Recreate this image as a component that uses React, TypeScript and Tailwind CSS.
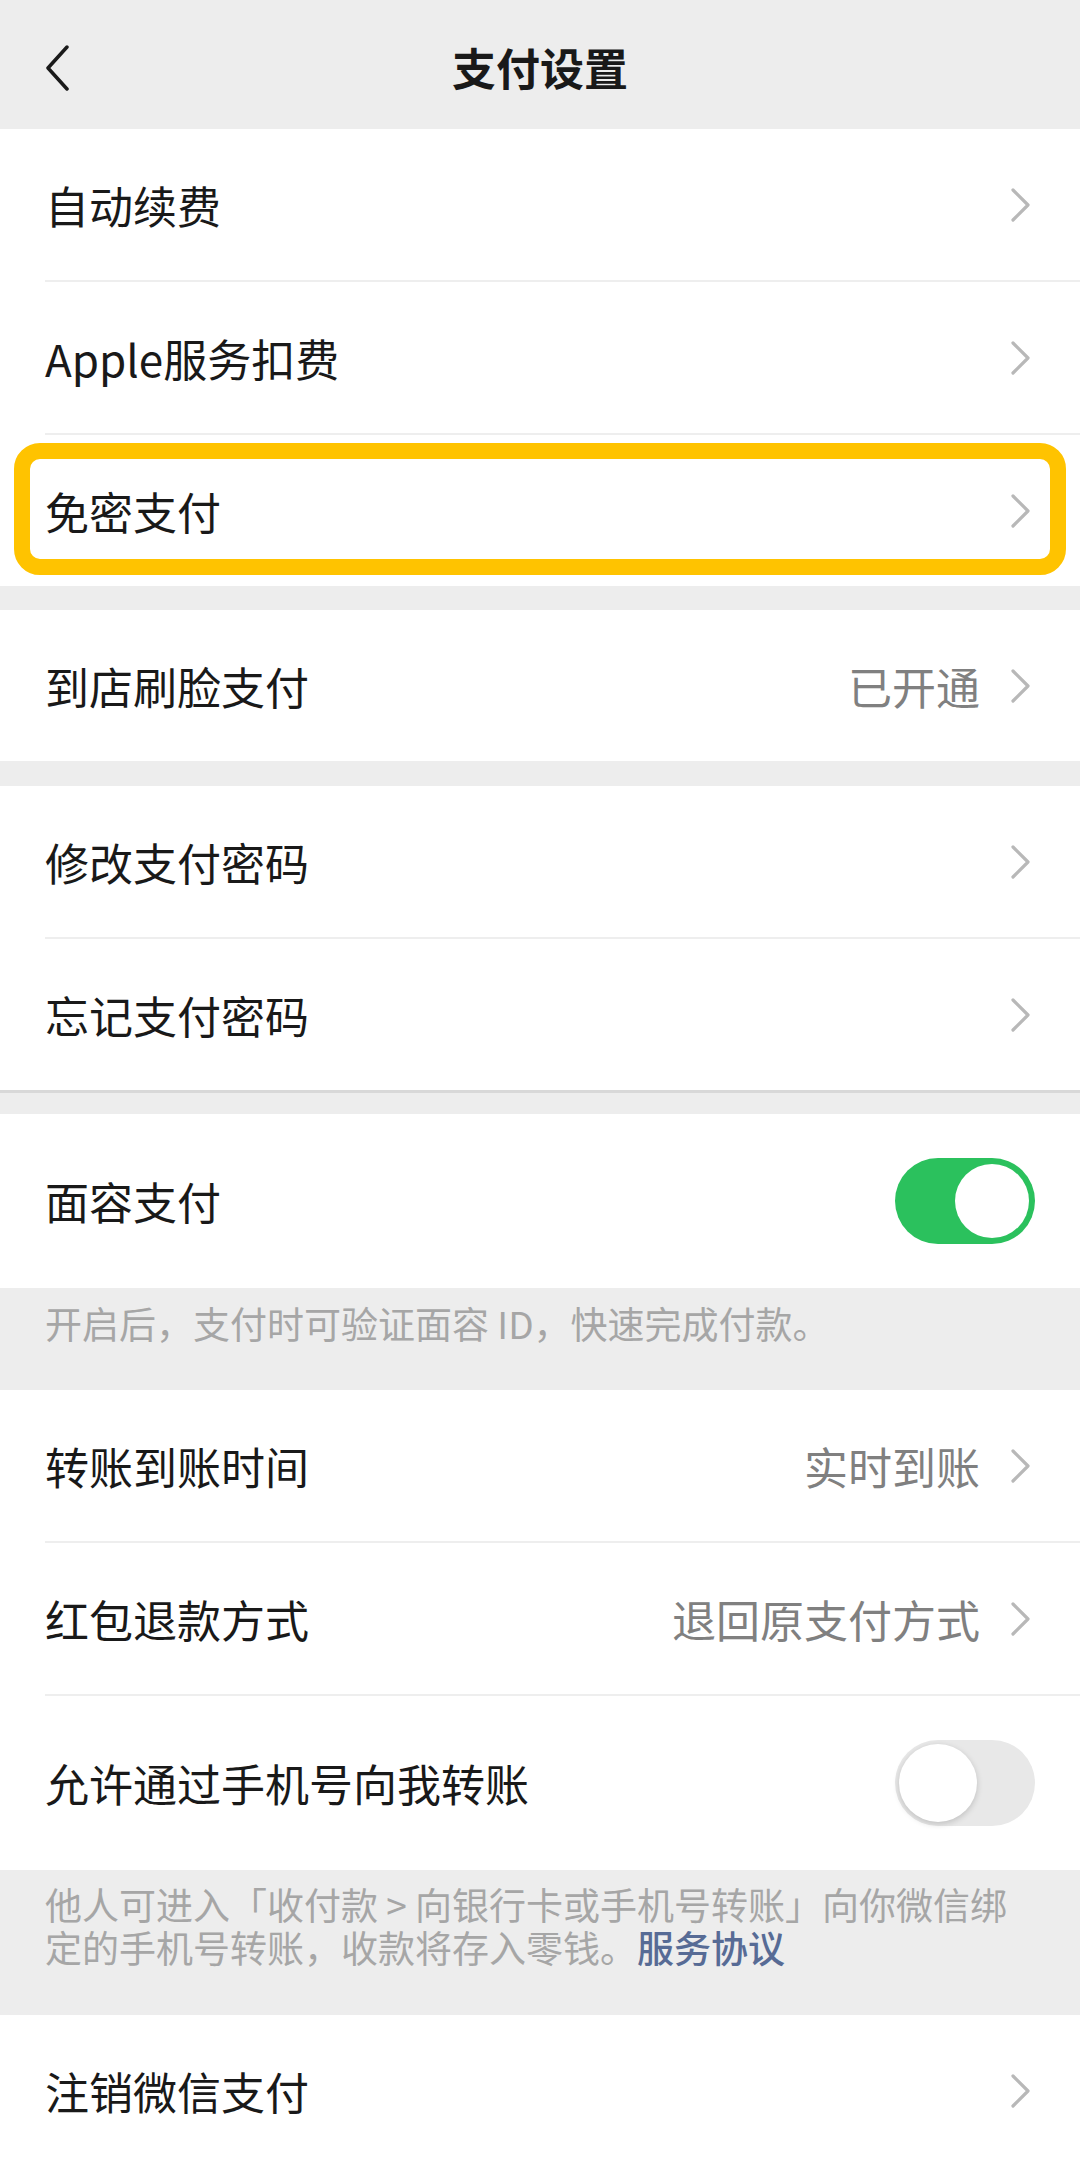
import type { ReactNode } from "react";

const font = { fontFamily: '"Noto Sans CJK SC", "Noto Sans", sans-serif' };

function Chevron() {
  return (
    <svg width="22" height="36" viewBox="0 0 22 36" fill="none" className="shrink-0">
      <polyline
        points="3,3 18,18 3,33"
        stroke="#b8b8b8"
        strokeWidth="3.2"
        strokeLinecap="round"
        strokeLinejoin="round"
      />
    </svg>
  );
}

function BackIcon() {
  return (
    <svg width="28" height="46" viewBox="0 0 28 46" fill="none">
      <polyline
        points="23,2 4,23 23,44"
        stroke="#1a1a1a"
        strokeWidth="3.5"
        strokeLinecap="round"
        strokeLinejoin="round"
      />
    </svg>
  );
}

function Divider() {
  return (
    <div className="bg-white pl-[45px]">
      <div className="h-[2px] bg-[#eeeeee]" />
    </div>
  );
}

interface RowProps {
  label: string;
  value?: string;
  children?: ReactNode;
}

// plain navigation row: label, optional value, chevron
function Row({ label, value, children }: RowProps) {
  return (
    <div className="relative flex h-[151px] items-center justify-between bg-white pl-[45px] pr-[48px]">
      <span className="text-[44px] leading-none text-[#191919]">{label}</span>
      <div className="flex items-center gap-[30px]">
        {value && <span className="text-[44px] leading-none text-[#808080]">{value}</span>}
        <Chevron />
      </div>
      {children}
    </div>
  );
}

function Switch({ on }: { on: boolean }) {
  return on ? (
    <div className="relative h-[86px] w-[140px] rounded-full bg-[#2bc15d]">
      <div className="absolute right-[6px] top-[6px] h-[74px] w-[74px] rounded-full bg-white" />
    </div>
  ) : (
    <div className="relative h-[86px] w-[140px] rounded-full bg-[#e8e8e8]">
      <div className="absolute left-[4px] top-[4px] h-[78px] w-[78px] rounded-full bg-white shadow-[0_2px_6px_rgba(0,0,0,0.18)]" />
    </div>
  );
}

function SwitchRow({ label, on }: { label: string; on: boolean }) {
  return (
    <div className="flex h-[174px] items-center justify-between bg-white pl-[45px] pr-[45px]">
      <span className="text-[44px] leading-none text-[#191919]">{label}</span>
      <Switch on={on} />
    </div>
  );
}

export default function App() {
  return (
    <div className="h-[2162px] w-[1080px] overflow-hidden bg-[#ededed]" style={font}>
      {/* Header */}
      <div className="relative flex h-[129px] items-center justify-center bg-[#ededed] pt-[4px]">
        <div className="absolute left-[44px] top-[45px]">
          <BackIcon />
        </div>
        <h1 className="text-[44px] font-semibold leading-none text-[#191919]">支付设置</h1>
      </div>

      {/* Group 1 */}
      <Row label="自动续费" />
      <Divider />
      <Row label="Apple服务扣费" />
      <Divider />
      <Row label="免密支付">
        <div className="pointer-events-none absolute bottom-[11px] left-[14px] right-[14px] top-[8px] rounded-[26px] border-[16px] border-[#ffc300]" />
      </Row>

      <div className="h-[24px]" />
      <Row label="到店刷脸支付" value="已开通" />

      <div className="h-[25px]" />
      <Row label="修改支付密码" />
      <Divider />
      <Row label="忘记支付密码" />

      <div className="h-[3px] bg-[#d8d8d8]" />
      <div className="h-[21px]" />
      <SwitchRow label="面容支付" on />
      <p className="h-[102px] pl-[45px] pr-[45px] pt-[12px] text-[37px] leading-[46px] text-[#a6a6a6]">
        开启后，支付时可验证面容 ID，快速完成付款。
      </p>

      <Row label="转账到账时间" value="实时到账" />
      <Divider />
      <Row label="红包退款方式" value="退回原支付方式" />
      <Divider />
      <SwitchRow label="允许通过手机号向我转账" on={false} />
      <div className="flex h-[145px] flex-col pl-[45px] pr-[40px] pt-[13px] text-[37px] leading-[43px] text-[#a6a6a6]">
        <span>他人可进入「收付款 &gt; 向银行卡或手机号转账」向你微信绑</span>
        <span>
          定的手机号转账，收款将存入零钱。
          <span className="font-medium text-[#576b95]">服务协议</span>
        </span>
      </div>

      <Row label="注销微信支付" />
    </div>
  );
}
